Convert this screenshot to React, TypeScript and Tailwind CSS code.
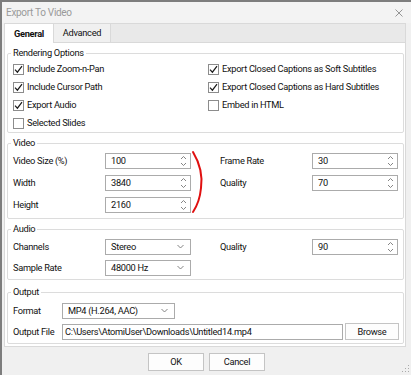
import React from 'react';

const font = { fontFamily: 'Roboto, "Noto Sans", sans-serif' };

const Check: React.FC<{ on?: boolean }> = ({ on }) => (
  <span className="w-[11px] h-[11px] border border-[#8c8c8c] bg-white flex items-center justify-center shrink-0">
    {on && (
      <svg width="9" height="9" viewBox="0 0 9 9">
        <path d="M1 4.6 L3.4 7.2 L8 1.2" fill="none" stroke="#1a1a1a" strokeWidth="1.2" />
      </svg>
    )}
  </span>
);

const CheckRow: React.FC<{ on?: boolean; label: string }> = ({ on, label }) => (
  <div className="h-[18px] flex items-center gap-[3px]">
    <Check on={on} />
    <span>{label}</span>
  </div>
);

const Spin: React.FC<{ value: string }> = ({ value }) => (
  <div className="w-[86px] h-[16px] border border-[#ababab] bg-white flex items-center pl-[5px] pr-[3px]">
    <span className="flex-1">{value}</span>
    <svg width="7" height="12" viewBox="0 0 7 12">
      <path d="M1 4 L3.5 1.5 L6 4" fill="none" stroke="#777" strokeWidth="0.9" />
      <path d="M1 8 L3.5 10.5 L6 8" fill="none" stroke="#777" strokeWidth="0.9" />
    </svg>
  </div>
);

const Combo: React.FC<{ value: string; w: string }> = ({ value, w }) => (
  <div className={`${w} h-[16px] border border-[#ababab] bg-white flex items-center pl-[5px] pr-[6px]`}>
    <span className="flex-1">{value}</span>
    <svg width="7" height="5" viewBox="0 0 7 5">
      <path d="M0.5 1 L3.5 4 L6.5 1" fill="none" stroke="#777" strokeWidth="0.9" />
    </svg>
  </div>
);

const Group: React.FC<{ title: string; className?: string; children: React.ReactNode }> = ({ title, className, children }) => (
  <fieldset className={`border border-[#dcdcdc] rounded-[2px] ${className ?? ''}`}>
    <legend className="ml-[3px] px-[2px] leading-[14px]">{title}</legend>
    {children}
  </fieldset>
);

const App: React.FC = () => {
  return (
    <div className="relative w-[411px] h-[375px] bg-[#7d7d7d] pt-[2px] pl-[2px] overflow-hidden text-[9.25px] tracking-[-0.3px] text-[#111] whitespace-nowrap" style={font}>
      <div className="h-full bg-[#f0f0f0] flex flex-col">
        {/* title bar */}
        <div className="h-[21px] flex items-center justify-between pl-[4px] pr-[8px] bg-[#f3f3f3] text-[#9a9a9a] text-[10px]">
          <span>Export To Video</span>
          <svg width="8" height="8" viewBox="0 0 8 8">
            <path d="M0.5 0.5 L7.5 7.5 M7.5 0.5 L0.5 7.5" stroke="#8a8a8a" strokeWidth="0.9" />
          </svg>
        </div>

        {/* tabs */}
        <div className="ml-[2px] w-[402px] h-[20px] flex">
          <div className="w-[50px] h-full bg-white border-l border-t border-r border-[#d9d9d9] flex items-center justify-center font-bold">
            General
          </div>
          <div className="w-[57px] h-full bg-[#f0f0f0] border-t border-r border-b border-[#d9d9d9] flex items-center justify-center">
            Advanced
          </div>
          <div className="flex-1 h-full bg-[#e9e9e9] border-t border-r border-b border-[#d9d9d9]" />
        </div>

        {/* tab panel */}
        <div className="ml-[2px] w-[402px] bg-white border-l border-r border-b border-[#d9d9d9] pl-[2px] pr-[1px] pt-[3px] pb-[2px]">
          <Group title="Rendering Options">
            <div className="flex pl-[5px]">
              <div className="w-[195px]">
                <CheckRow on label="Include Zoom-n-Pan" />
                <CheckRow on label="Include Cursor Path" />
                <CheckRow on label="Export Audio" />
                <CheckRow label="Selected Slides" />
              </div>
              <div>
                <CheckRow on label="Export Closed Captions as Soft Subtitles" />
                <CheckRow on label="Export Closed Captions as Hard Subtitles" />
                <CheckRow label="Embed in HTML" />
              </div>
            </div>
          </Group>

          <Group title="Video" className="mt-[3px] pb-[2px]">
            <div className="flex pl-[5px]">
              <div>
                <div className="h-[22px] flex items-center">
                  <span className="w-[92px]">Video Size (%)</span>
                  <Spin value="100" />
                </div>
                <div className="h-[22px] flex items-center">
                  <span className="w-[92px]">Width</span>
                  <Spin value="3840" />
                </div>
                <div className="h-[22px] flex items-center">
                  <span className="w-[92px]">Height</span>
                  <Spin value="2160" />
                </div>
              </div>
              <div className="ml-[29px]">
                <div className="h-[22px] flex items-center">
                  <span className="w-[92px]">Frame Rate</span>
                  <Spin value="30" />
                </div>
                <div className="h-[22px] flex items-center">
                  <span className="w-[92px]">Quality</span>
                  <Spin value="70" />
                </div>
              </div>
            </div>
          </Group>

          <Group title="Audio" className="mt-[3px] pb-[1px]">
            <div className="flex pl-[5px]">
              <div>
                <div className="h-[21px] flex items-center">
                  <span className="w-[92px]">Channels</span>
                  <Combo value="Stereo" w="w-[86px]" />
                </div>
                <div className="h-[21px] flex items-center">
                  <span className="w-[92px]">Sample Rate</span>
                  <Combo value="48000 Hz" w="w-[86px]" />
                </div>
              </div>
              <div className="ml-[29px]">
                <div className="h-[21px] flex items-center">
                  <span className="w-[92px]">Quality</span>
                  <Spin value="90" />
                </div>
              </div>
            </div>
          </Group>

          <Group title="Output" className="mt-[5px] pt-[1px] pb-[1px]">
            <div className="pl-[5px]">
              <div className="h-[21px] flex items-center">
                <span className="w-[49px]">Format</span>
                <Combo value="MP4 (H.264, AAC)" w="w-[113px]" />
              </div>
              <div className="h-[21px] flex items-center">
                <span className="w-[49px]">Output File</span>
                <div className="w-[281px] h-[16px] border border-[#ababab] bg-white flex items-center pl-[2px] overflow-hidden">
                  C:\Users\AtomiUser\Downloads\Untitled14.mp4
                </div>
                <button className="ml-[2px] w-[54px] h-[17px] border border-[#c4c4c4] bg-[#fdfdfd] flex items-center justify-center">
                  Browse
                </button>
              </div>
            </div>
          </Group>
        </div>

        {/* buttons */}
        <div className="mt-[6px] flex justify-center gap-[5px]">
          <button className="w-[56px] h-[18px] border border-[#c4c4c4] bg-[#fdfdfd] flex items-center justify-center">OK</button>
          <button className="w-[56px] h-[18px] border border-[#c4c4c4] bg-[#fdfdfd] flex items-center justify-center">Cancel</button>
        </div>
      </div>

      {/* resize grip */}
      <svg className="absolute right-[1px] bottom-[2px]" width="8" height="8" viewBox="0 0 8 8">
        <rect x="6" y="0" width="1" height="1" fill="#aaa" />
        <rect x="3" y="3" width="1" height="1" fill="#aaa" />
        <rect x="6" y="3" width="1" height="1" fill="#aaa" />
        <rect x="0" y="6" width="1" height="1" fill="#aaa" />
        <rect x="3" y="6" width="1" height="1" fill="#aaa" />
        <rect x="6" y="6" width="1" height="1" fill="#aaa" />
      </svg>

      {/* red annotation */}
      <svg className="absolute left-0 top-0 pointer-events-none" width="411" height="375" viewBox="0 0 411 375">
        <path d="M193 152 C199 162 203 174 201 188 C200 199 197 206 193 212" fill="none" stroke="#e01010" strokeWidth="2" strokeLinecap="round" />
      </svg>
    </div>
  );
};

export default App;
